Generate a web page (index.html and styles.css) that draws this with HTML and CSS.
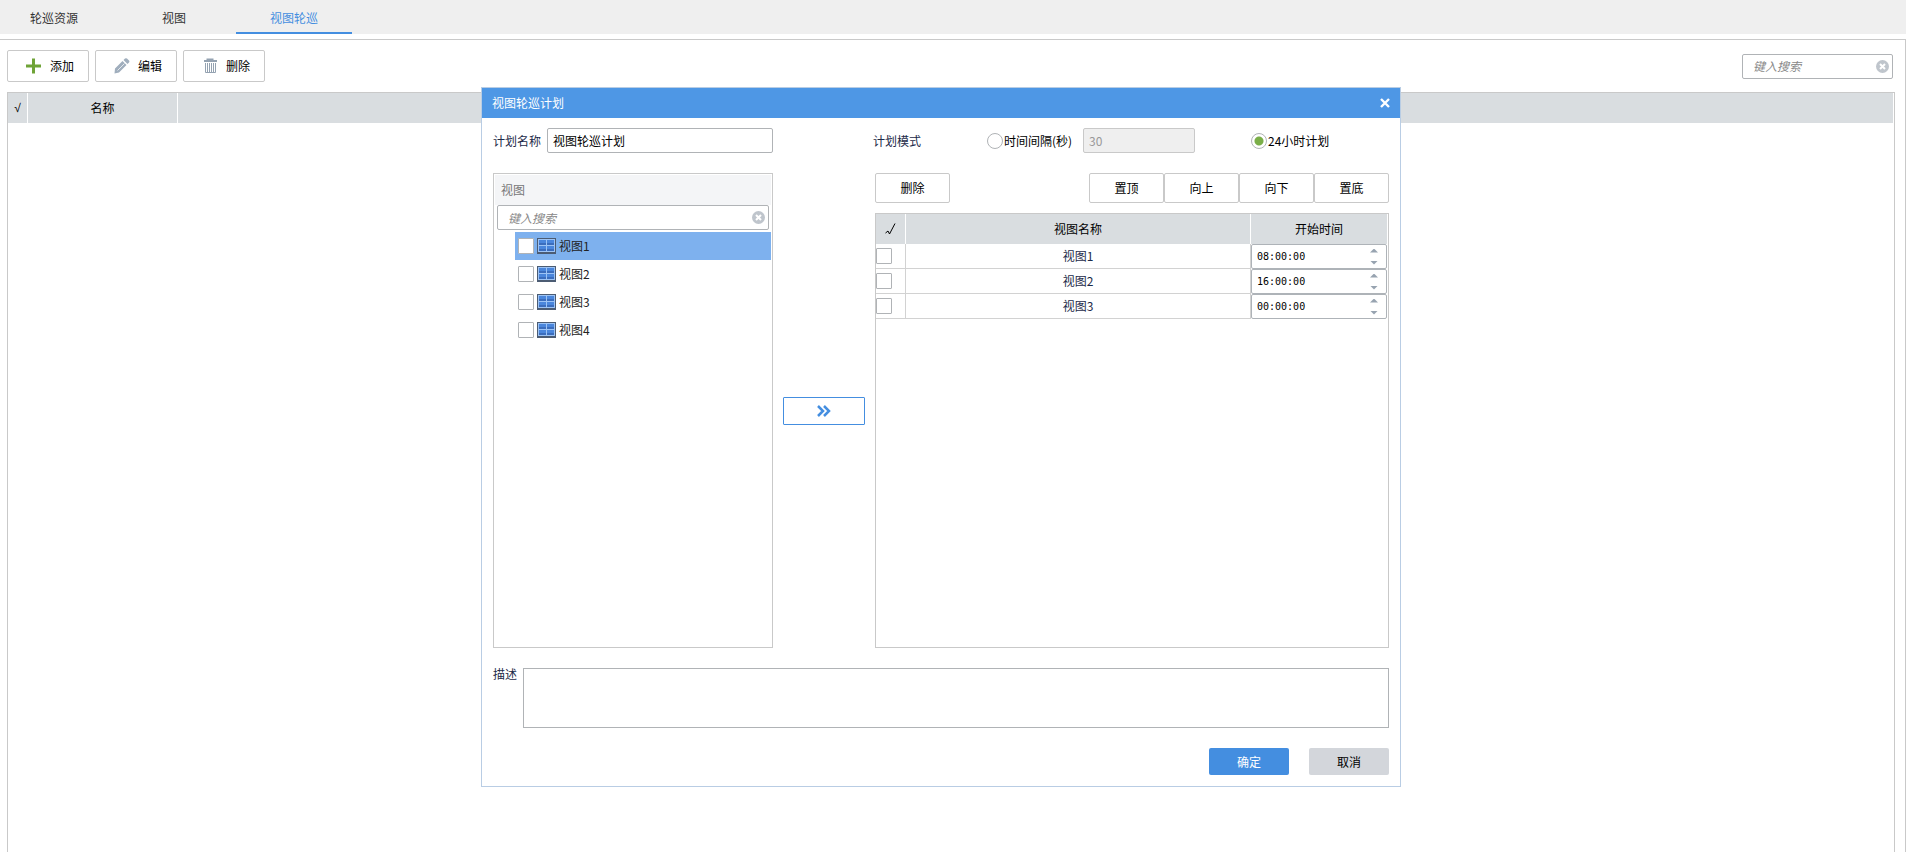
FILE: index.html
```
<!DOCTYPE html>
<html lang="zh-CN">

<head>
  <meta charset="UTF-8">
  <meta name="viewport" content="width=device-width, initial-scale=1.0">
  <title>视图轮巡</title>
  <link rel="stylesheet" href="styles.css">
</head>

<body>
  <!-- Tabs -->
  <nav class="tabs">
    <a href="#resource" class="tab">轮巡资源</a>
    <a href="#view" class="tab">视图</a>
    <a href="#view-patrol" class="tab active">视图轮巡</a>
  </nav>

  <main class="workspace">
    <div class="toolbar">
      <button type="button" class="btn tool-btn">
        <svg width="16" height="16" viewBox="0 0 16 16"><path d="M0 8h15M7.500 .5v15" stroke="#6fa337" stroke-width="3" fill="none"/></svg>
        添加
      </button>
      <button type="button" class="btn tool-btn">
        <svg width="16" height="16" viewBox="0 0 16 16" fill="#a0aebd"><path d="M1 10.500 8.500 3l4 4L5 14.500l-4.500 1zM9.500 2l1.500-1.500q1-.7 2 0l2 2q.8 1 0 2L13.500 6z"/><path d="M3.500 12.500 10.500 5.500" stroke="#e4e9ee" stroke-width="1"/></svg>
        编辑
      </button>
      <button type="button" class="btn tool-btn">
        <svg width="16" height="16" viewBox="0 0 16 16" fill="none" stroke="#94a2b1"><path d="M5.500 2V1.500h5V2M2 3h13" stroke-width="2"/><path d="M3.500 5v9.500h10V5M5.500 5v9M7.500 5v9M9.500 5v9M11.500 5v9"/></svg>
        删除
      </button>
      <div class="search toolbar-search">
        <input type="text" placeholder="键入搜索" aria-label="键入搜索">
        <button type="button" class="clear" aria-label="清除">
          <svg width="13" height="13" viewBox="0 0 13 13"><circle cx="6.500" cy="6.500" r="6.500" fill="#bfc5cc"/><path d="M4 4l5 5M9 4l-5 5" stroke="#fff" stroke-width="2"/></svg>
        </button>
      </div>
    </div>

    <div class="plan-list">
      <table class="grid-table">
        <thead>
          <tr>
            <th class="col-tick">√</th>
            <th class="col-name">名称</th>
            <th></th>
          </tr>
        </thead>
      </table>
    </div>
  </main>

  <!-- Plan dialog -->
  <section class="dialog" role="dialog" aria-labelledby="dialog-title">
    <header class="dialog-header">
      <h1 id="dialog-title">视图轮巡计划</h1>
      <button type="button" class="close" aria-label="关闭">
        <svg width="10" height="10" viewBox="0 0 10 10"><path d="M1 1l8 8M9 1L1 9" stroke="#fff" stroke-width="2.400"/></svg>
      </button>
    </header>

    <form class="dialog-body">
      <div class="form-row">
        <label for="plan-name" class="name-label">计划名称</label>
        <input type="text" id="plan-name" class="field name-field" value="视图轮巡计划">
        <span class="mode-label">计划模式</span>
        <label class="radio interval"><input type="radio" name="mode">时间间隔(秒)</label>
        <input type="text" class="field interval-field" value="30" aria-label="时间间隔" disabled>
        <label class="radio"><input type="radio" name="mode" checked>24小时计划</label>
      </div>

      <div class="columns">
        <div class="panel view-panel">
          <h2 class="panel-title">视图</h2>
          <div class="search">
            <input type="text" placeholder="键入搜索" aria-label="搜索视图">
            <button type="button" class="clear" aria-label="清除">
              <svg width="13" height="13" viewBox="0 0 13 13"><circle cx="6.500" cy="6.500" r="6.500" fill="#bfc5cc"/><path d="M4 4l5 5M9 4l-5 5" stroke="#fff" stroke-width="2"/></svg>
            </button>
          </div>
          <ul class="view-list">
            <li class="selected"><label><input type="checkbox" class="check"><svg width="19" height="16"><use href="#view-icon"/></svg>视图1</label></li>
            <li><label><input type="checkbox" class="check"><svg width="19" height="16"><use href="#view-icon"/></svg>视图2</label></li>
            <li><label><input type="checkbox" class="check"><svg width="19" height="16"><use href="#view-icon"/></svg>视图3</label></li>
            <li><label><input type="checkbox" class="check"><svg width="19" height="16"><use href="#view-icon"/></svg>视图4</label></li>
          </ul>
        </div>

        <button type="button" class="move" aria-label="添加到计划">
          <svg width="14" height="12" viewBox="0 0 14 12"><path d="M1 1l5 5-5 5M7 1l5 5-5 5" fill="none" stroke="#448ee0" stroke-width="2.500"/></svg>
        </button>

        <div class="schedule">
          <div class="order-bar">
            <button type="button" class="btn order-btn remove">删除</button>
            <button type="button" class="btn order-btn">置顶</button>
            <button type="button" class="btn order-btn">向上</button>
            <button type="button" class="btn order-btn">向下</button>
            <button type="button" class="btn order-btn">置底</button>
          </div>
          <div class="panel schedule-panel">
            <table class="grid-table">
              <thead>
                <tr>
                  <th class="col-check"><svg width="11" height="12" viewBox="0 0 11 12"><path d="M.5 10 3 8l1.500 3L10 .5" fill="none" stroke="#000"/></svg></th>
                  <th>视图名称</th>
                  <th class="col-time">开始时间</th>
                </tr>
              </thead>
              <tbody>
                <tr>
                  <td><input type="checkbox" class="check" aria-label="视图1"></td>
                  <td class="view-name">视图1</td>
                  <td class="time-cell">
                    <div class="spin">
                      <input type="text" value="08:00:00" aria-label="视图1 开始时间">
                      <span class="arrows"><button type="button" class="up" aria-label="增加"></button><button type="button" class="down" aria-label="减少"></button></span>
                    </div>
                  </td>
                </tr>
                <tr>
                  <td><input type="checkbox" class="check" aria-label="视图2"></td>
                  <td class="view-name">视图2</td>
                  <td class="time-cell">
                    <div class="spin">
                      <input type="text" value="16:00:00" aria-label="视图2 开始时间">
                      <span class="arrows"><button type="button" class="up" aria-label="增加"></button><button type="button" class="down" aria-label="减少"></button></span>
                    </div>
                  </td>
                </tr>
                <tr>
                  <td><input type="checkbox" class="check" aria-label="视图3"></td>
                  <td class="view-name">视图3</td>
                  <td class="time-cell">
                    <div class="spin">
                      <input type="text" value="00:00:00" aria-label="视图3 开始时间">
                      <span class="arrows"><button type="button" class="up" aria-label="增加"></button><button type="button" class="down" aria-label="减少"></button></span>
                    </div>
                  </td>
                </tr>
              </tbody>
            </table>
          </div>
        </div>
      </div>

      <div class="desc-row">
        <label for="desc">描述</label>
        <textarea id="desc"></textarea>
      </div>

      <div class="actions">
        <button type="button" class="action primary">确定</button>
        <button type="button" class="action">取消</button>
      </div>
    </form>
  </section>

  <!-- Shared icon -->
  <svg class="symbols" aria-hidden="true">
    <symbol id="view-icon" viewBox="0 0 19 16">
      <rect width="19" height="16" fill="#4c5c73"/>
      <rect x="1" y="1" width="17" height="13" fill="#9cc3f5"/>
      <path d="M2 2h7v5H2zM10 2h7v5h-7zM2 8h7v5H2zM10 8h7v5h-7z" fill="#4a86dc"/>
      <path d="M2 5h7v2H2zM10 5h7v2h-7zM2 11h7v2H2zM10 11h7v2h-7z" fill="#3b6dbd"/>
    </symbol>
  </svg>

  <!-- Watermark -->
  <svg class="watermark" aria-hidden="true">
    <defs>
      <g id="mark-column">
        <text transform="translate(0 4) rotate(-45)">L04430C,00:E0:4C:99:F6:58</text>
        <text transform="translate(0 315) rotate(-45)">L04430C,00:E0:4C:99:F6:58</text>
        <text transform="translate(0 626) rotate(-45)">L04430C,00:E0:4C:99:F6:58</text>
        <text transform="translate(0 937) rotate(-45)">L04430C,00:E0:4C:99:F6:58</text>
      </g>
    </defs>
    <use href="#mark-column"/>
    <use href="#mark-column" x="281" y="31"/>
    <use href="#mark-column" x="562" y="62"/>
    <use href="#mark-column" x="843" y="93"/>
    <use href="#mark-column" x="1124" y="124"/>
    <use href="#mark-column" x="1405" y="155"/>
    <use href="#mark-column" x="1686" y="186"/>
  </svg>
</body>

</html>
```
FILE: styles.css
```
* {
  box-sizing: border-box;
}

body {
  margin: 0;
  min-height: 100vh;
  display: flex;
  flex-direction: column;
  position: relative;
  background-color: #fff;
  color: #000;
  font-family: "Noto Sans CJK SC", sans-serif;
  font-size: 12px;
  line-height: 18px;
}

button,
input,
textarea {
  font: inherit;
  color: inherit;
  margin: 0;
}

button {
  padding: 0;
  cursor: pointer;
}

svg {
  display: block;
  flex: none;
}

/* Tabs */
.tabs {
  display: flex;
  gap: 4px;
  height: 34px;
  background-color: #efefef;
}

.tab {
  width: 116px;
  height: 34px;
  line-height: 36px;
  text-align: center;
  color: #333;
  text-decoration: none;
}

.tab:first-child {
  width: 112px;
  padding-right: 4px;
}

.tab.active {
  color: #448ee0;
  border-bottom: 2px solid #448ee0;
}

/* Page */
.workspace {
  flex: 1;
  display: flex;
  flex-direction: column;
  margin-top: 5px;
  padding: 10px 10px 0 7px;
  border-top: 1px solid #c9c9c9;
  border-right: 1px solid #c9c9c9;
}

.toolbar {
  display: flex;
  align-items: center;
  gap: 6px;
  margin-bottom: 10px;
}

.btn {
  background-color: #fff;
  border: 1px solid #c9c9c9;
  border-radius: 2px;
}

.tool-btn {
  display: flex;
  align-items: center;
  gap: 8px;
  width: 82px;
  height: 32px;
  padding-left: 18px;
}

.search {
  display: flex;
  align-items: center;
  height: 25px;
  padding: 0 3px 0 10px;
  border: 1px solid #b0b3b6;
  border-radius: 2px;
  background-color: #fff;
}

.search input {
  flex: 1;
  min-width: 0;
  padding: 0;
  border: none;
  outline: none;
  background: none;
}

.search input::placeholder {
  color: #888;
  font-style: italic;
}

.toolbar-search {
  width: 151px;
  margin-left: auto;
  margin-right: 2px;
}

.clear,
.close {
  border: none;
  background: none;
}

.plan-list {
  flex: 1;
  padding-right: 1px;
  border: 1px solid #c9c9c9;
  border-bottom: none;
}

.grid-table {
  width: 100%;
  table-layout: fixed;
  border-spacing: 0;
}

.grid-table th {
  height: 30px;
  padding: 0;
  font-weight: normal;
  background-color: #d9dde0;
  border-right: 1px solid #fff;
}

.grid-table th:last-child {
  border-right: none;
}

.grid-table th svg {
  margin: 0 auto;
}

.grid-table .col-tick {
  width: 20px;
  font-family: "Liberation Sans", sans-serif;
}

.col-name {
  width: 150px;
}

/* Dialog */
.dialog {
  position: absolute;
  top: 87px;
  left: 481px;
  width: 920px;
  background-color: #fff;
  border: 1px solid #b9cde4;
}

.dialog-header {
  display: flex;
  align-items: center;
  justify-content: space-between;
  height: 30px;
  padding: 0 10px;
  background-color: #4e97e5;
}

.dialog-header h1 {
  margin: 0;
  font-size: 12px;
  font-weight: normal;
  color: #fff;
}

.dialog-body {
  display: flex;
  flex-direction: column;
  gap: 20px;
  padding: 10px 11px 11px;
}

.form-row {
  display: flex;
  align-items: center;
  color: #1c2a48;
}

.field {
  height: 25px;
  padding: 0 5px;
  border: 1px solid #b0b3b6;
  border-radius: 2px;
  background-color: #fff;
  color: #000;
}

.field:disabled {
  background-color: #efefef;
  border-color: #c9c9c9;
  color: #999;
}

.name-label {
  width: 54px;
}

.name-field {
  width: 226px;
}

.mode-label {
  width: 114px;
  margin-left: 100px;
}

.radio {
  display: flex;
  align-items: center;
  gap: 1px;
  color: #000;
  white-space: nowrap;
}

.radio input {
  appearance: none;
  flex: none;
  width: 16px;
  height: 16px;
  border: 1px solid #b0b3b6;
  border-radius: 50%;
  background-color: #fff;
}

.radio input:checked {
  background-image: radial-gradient(circle, #7aae48 4px, #fff 5px);
}

.interval {
  width: 96px;
}

.interval-field {
  width: 112px;
  margin-right: 56px;
}

.columns {
  display: flex;
  align-items: stretch;
  height: 475px;
}

.panel {
  border: 1px solid #c9c9c9;
}

.view-panel {
  width: 280px;
  padding: 1px;
}

.panel-title {
  margin: 0;
  padding-left: 6px;
  font-size: 12px;
  font-weight: normal;
  line-height: 30px;
  color: #777;
  background-color: #f4f5f7;
}

.view-panel .search {
  margin: 0 2px;
}

.view-list {
  list-style-type: none;
  margin: 2px 0 0 20px;
  padding: 0;
}

.view-list label {
  display: flex;
  align-items: center;
  gap: 3px;
  height: 28px;
  padding-left: 3px;
  color: #222;
}

.view-list .selected {
  background-color: #7eb1ee;
}

.check {
  appearance: none;
  display: block;
  width: 16px;
  height: 16px;
  border: 1px solid #b0b3b6;
  border-radius: 1px;
  background-color: #fff;
}

.move {
  display: flex;
  align-items: center;
  justify-content: center;
  align-self: center;
  width: 82px;
  height: 28px;
  margin: 0 10px;
  border: 1px solid #448ee0;
  border-radius: 1px;
  background-color: #fff;
}

.schedule {
  flex: 1;
  display: flex;
  flex-direction: column;
  gap: 10px;
}

.order-bar {
  display: flex;
}

.order-btn {
  width: 75px;
  height: 30px;
}

.remove {
  margin-right: auto;
}

.schedule-panel {
  flex: 1;
  padding-right: 1px;
}

.col-check {
  width: 30px;
}

.col-time {
  width: 136px;
}

.grid-table td {
  height: 25px;
  padding: 0;
  border-right: 1px solid #d2d2d2;
  border-bottom: 1px solid #d2d2d2;
}

.grid-table .view-name {
  text-align: center;
  color: #1c2a48;
}

.grid-table .time-cell {
  border: none;
}

.spin {
  display: flex;
  align-items: center;
  height: 25px;
  padding: 0 8px 0 5px;
  border: 1px solid #aeb3b8;
  border-radius: 2px;
}

.spin input {
  flex: 1;
  min-width: 0;
  padding: 0;
  border: none;
  outline: none;
  font-family: "DejaVu Sans Mono", monospace;
  font-size: 10px;
}

.arrows {
  display: flex;
  flex-direction: column;
  gap: 8px;
}

.arrows button {
  width: 8px;
  height: 4px;
  border: none;
  background-color: #97a3b0;
}

.up {
  clip-path: polygon(50% 0, 100% 100%, 0 100%);
}

.down {
  clip-path: polygon(0 0, 100% 0, 50% 100%);
}

.desc-row {
  display: flex;
  align-items: flex-start;
  color: #1c2a48;
}

.desc-row label {
  width: 30px;
  line-height: 12px;
}

.desc-row textarea {
  flex: 1;
  height: 60px;
  border: 1px solid #b0b3b6;
  resize: none;
}

.actions {
  display: flex;
  justify-content: flex-end;
  gap: 20px;
}

.action {
  width: 80px;
  height: 27px;
  border: none;
  border-radius: 2px;
  background-color: #d3d6db;
}

.action.primary {
  background-color: #448ee0;
  color: #fff;
}

.symbols {
  position: absolute;
  width: 0;
  height: 0;
}

/* Watermark over the whole window */
.watermark {
  position: absolute;
  top: 0;
  left: 0;
  width: 100%;
  height: 100%;
  overflow: hidden;
  pointer-events: none;
  font-family: "Noto Sans", sans-serif;
  font-size: 14px;
  fill: #000;
  fill-opacity: 0.02;
}
```
